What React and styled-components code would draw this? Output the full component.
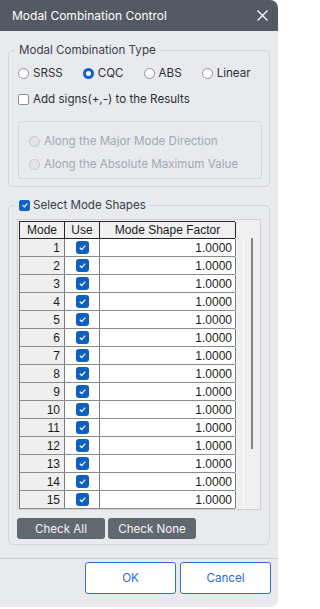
import React from 'react';
import styled, { createGlobalStyle } from 'styled-components';

const GlobalStyle = createGlobalStyle`
	body {
		margin: 0;
		background: #ffffff;
		font-family: Inter, "Liberation Sans", sans-serif;
	}
`;

const Dialog = styled.div`
	width: 278px;
	height: 607px;
	background: #e9eaee;
	border-radius: 0 8px 8px 0;
	overflow: hidden;
	display: flex;
	flex-direction: column;
`;

const TitleBar = styled.div`
	height: 31px;
	background: #535a63;
	color: #ffffff;
	display: flex;
	align-items: center;
	justify-content: space-between;
	padding: 0 10px 0 12px;
	font-size: 12px;
`;

const Body = styled.div`
	padding: 11px 8px 0 8px;
	display: flex;
	flex-direction: column;
	gap: 10px;
`;

const Group = styled.fieldset`
	margin: 0;
	padding: 0;
	min-width: 0;
	border: 1px solid #d2d4d9;
	border-radius: 5px;
`;

const Legend = styled.legend`
	margin-left: 6px;
	padding: 0 4px;
	height: 16px;
	line-height: 16px;
	font-size: 11.6px;
	color: #3a404b;
	display: flex;
	align-items: center;
	gap: 3px;
`;

const GroupContent = styled.div`
	padding: ${props => props.pad};
	display: flex;
	flex-direction: column;
`;

const RadioRow = styled.div`
	display: flex;
	gap: ${props => props.gap || 20}px;
	padding-left: ${props => props.indent || 0}px;
	margin-top: ${props => props.top || 0}px;
`;

const Option = styled.label`
	height: 18px;
	display: flex;
	align-items: center;
	gap: 4px;
	font-size: 11.6px;
	color: ${props => (props.disabled ? '#a3a8b1' : '#2b3038')};
`;

const Radio = styled.span`
	width: 11px;
	height: 11px;
	box-sizing: border-box;
	border-radius: 50%;
	flex: none;
	background: ${props => (props.disabled ? '#e4e5e8' : '#ffffff')};
	border: ${props =>
		props.checked
			? '3px solid #0f62c6'
			: props.disabled
			? '1px solid #c3c6cb'
			: '1px solid #8c9096'};
`;

const Box = styled.span`
	width: 11px;
	height: 11px;
	box-sizing: border-box;
	border-radius: 2px;
	flex: none;
	display: flex;
	align-items: center;
	justify-content: center;
	background: ${props => (props.checked ? '#0f62c6' : '#ffffff')};
	border: 1px solid ${props => (props.checked ? '#0f62c6' : '#8c9096')};
`;

const SubBox = styled.div`
	margin-top: 13px;
	margin-left: 9px;
	margin-right: 7px;
	height: 58px;
	box-sizing: border-box;
	border: 1px solid #d5d7db;
	border-radius: 4px;
	padding: 10px 0 0 10px;
	display: flex;
	flex-direction: column;
	gap: 5px;
`;

const Frame = styled.div`
	margin: 0 8px 0 8px;
	height: 291px;
	box-sizing: border-box;
	border: 1px solid #cfd1d5;
	background: #f0f0f0;
	padding: 1px 0 0 1px;
	display: flex;
	overflow: hidden;
`;

const Table = styled.div`
	width: 216px;
	flex: none;
	display: flex;
	flex-direction: column;
	font-family: "Liberation Sans", Arial, sans-serif;
	font-size: 12px;
	color: #1b1b1b;
`;

const HeadRow = styled.div`
	display: grid;
	grid-template-columns: 45px 35px 136px;
	height: 21px;
	box-sizing: border-box;
	border: 1px solid #262626;
	border-right: none;
	background: #f0f0f0;
`;

const HeadCell = styled.div`
	display: flex;
	align-items: center;
	justify-content: center;
	border-right: 1px solid #262626;
`;

const Row = styled.div`
	display: grid;
	grid-template-columns: 45px 35px 136px;
	height: 18px;
	flex: none;
	box-sizing: border-box;
	border-left: 1px solid #6e6e6e;
	border-bottom: 1px solid #8c8c8c;
`;

const Cell = styled.div`
	display: flex;
	align-items: center;
	justify-content: ${props => props.align || 'flex-end'};
	padding-right: ${props => props.pr || 0}px;
	background: ${props => (props.shade ? '#efefef' : '#ffffff')};
	border-right: 1px solid #7a7a7a;
`;

const UseBox = styled.span`
	width: 13px;
	height: 13px;
	border-radius: 3px;
	background: #0d5fc2;
	display: flex;
	align-items: center;
	justify-content: center;
`;

const Track = styled.div`
	flex: 1;
	display: flex;
	padding-top: 17px;
`;

const TrackLine = styled.div`
	width: 1px;
	margin-left: 8px;
	background: #fbfbfb;
`;

const Thumb = styled.div`
	width: 2px;
	height: 211px;
	margin-left: 7px;
	background: #858585;
`;

const ButtonRow = styled.div`
	display: flex;
	gap: 3px;
	margin: 8px 0 5px 8px;
`;

const GreyButton = styled.button`
	height: 21px;
	width: ${props => props.w}px;
	border: none;
	border-radius: 3px;
	background: #62686f;
	color: #f2f3f5;
	font-family: Inter, "Liberation Sans", sans-serif;
	font-size: 11.6px;
	padding: 0;
`;

const Footer = styled.div`
	margin-top: 13px;
	border-top: 1px solid #c9cbd0;
	padding: 3px 7px 0 0;
	display: flex;
	justify-content: flex-end;
	gap: 4px;
`;

const DialogButton = styled.button`
	width: 91px;
	height: 32px;
	box-sizing: border-box;
	border: 1px solid #2f6fdd;
	border-radius: 3px;
	background: #ffffff;
	color: #2c6bd8;
	font-family: Inter, "Liberation Sans", sans-serif;
	font-size: 11.6px;
`;

function Tick({ size = 8 }) {
	return (
		<svg width={size} height={size} viewBox='0 0 10 10'>
			<path d='M2 5.2 L4.2 7.3 L8 3' fill='none' stroke='#ffffff' strokeWidth='1.4' />
		</svg>
	);
}

const modes = Array.from({ length: 15 }, (_, i) => i + 1);

function App() {
	return (
		<>
			<GlobalStyle />
			<Dialog>
				<TitleBar>
					<span>Modal Combination Control</span>
					<svg width='11' height='11' viewBox='0 0 11 11'>
						<path d='M0.5 0.5 L10.5 10.5 M10.5 0.5 L0.5 10.5' stroke='#ffffff' strokeWidth='1.2' />
					</svg>
				</TitleBar>
				<Body>
					<Group>
						<Legend>Modal Combination Type</Legend>
						<GroupContent pad='6px 0 7px 0'>
							<RadioRow indent={9} gap={20}>
								<Option><Radio />SRSS</Option>
								<Option><Radio checked />CQC</Option>
								<Option><Radio />ABS</Option>
								<Option><Radio />Linear</Option>
							</RadioRow>
							<RadioRow indent={9} top={8}>
								<Option><Box />Add signs(+,-) to the Results</Option>
							</RadioRow>
							<SubBox>
								<Option disabled><Radio disabled />Along the Major Mode Direction</Option>
								<Option disabled><Radio disabled />Along the Absolute Maximum Value</Option>
							</SubBox>
						</GroupContent>
					</Group>
					<Group>
						<Legend>
							<Box checked><Tick /></Box>
							Select Mode Shapes
						</Legend>
						<GroupContent pad='6px 0 0 0'>
							<Frame>
								<Table>
									<HeadRow>
										<HeadCell>Mode</HeadCell>
										<HeadCell>Use</HeadCell>
										<HeadCell>Mode Shape Factor</HeadCell>
									</HeadRow>
									{modes.map(m => (
										<Row key={m}>
											<Cell shade pr={4}>{m}</Cell>
											<Cell align='center'>
												<UseBox><Tick size={9} /></UseBox>
											</Cell>
											<Cell pr={3}>1.0000</Cell>
										</Row>
									))}
								</Table>
								<Track>
									<TrackLine />
									<Thumb />
								</Track>
							</Frame>
							<ButtonRow>
								<GreyButton w={88}>Check All</GreyButton>
								<GreyButton w={88}>Check None</GreyButton>
							</ButtonRow>
						</GroupContent>
					</Group>
				</Body>
				<Footer>
					<DialogButton>OK</DialogButton>
					<DialogButton>Cancel</DialogButton>
				</Footer>
			</Dialog>
		</>
	);
}

export default App;
